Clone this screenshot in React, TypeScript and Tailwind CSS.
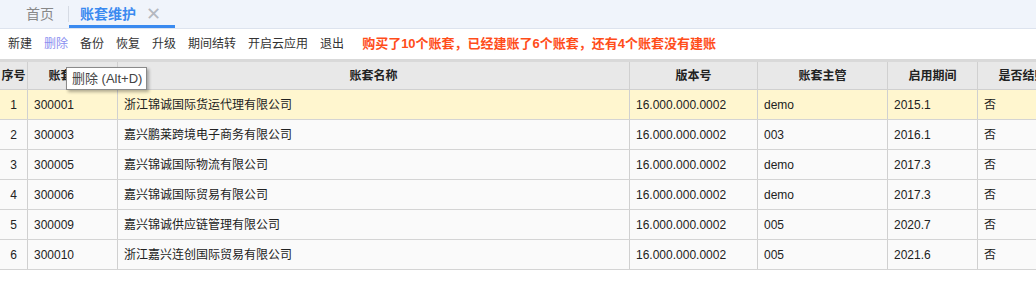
import React from 'react';

const font = { fontFamily: '"Liberation Sans", "Noto Sans CJK SC", sans-serif' };

const tools = ['新建', '删除', '备份', '恢复', '升级', '期间结转', '开启云应用', '退出'];

const columns = [
   { title: '序号', w: 'w-[27px]', center: true },
   { title: '账套编号', w: 'w-[90px]' },
   { title: '账套名称', w: 'w-[512px]' },
   { title: '版本号', w: 'w-[128px]' },
   { title: '账套主管', w: 'w-[130px]' },
   { title: '启用期间', w: 'w-[90px]' },
   { title: '是否结账', w: 'w-[90px]' },
];

const rows = [
   ['1', '300001', '浙江锦诚国际货运代理有限公司', '16.000.000.0002', 'demo', '2015.1', '否'],
   ['2', '300003', '嘉兴鹏莱跨境电子商务有限公司', '16.000.000.0002', '003', '2016.1', '否'],
   ['3', '300005', '嘉兴锦诚国际物流有限公司', '16.000.000.0002', 'demo', '2017.3', '否'],
   ['4', '300006', '嘉兴锦诚国际贸易有限公司', '16.000.000.0002', 'demo', '2017.3', '否'],
   ['5', '300009', '嘉兴锦诚供应链管理有限公司', '16.000.000.0002', '005', '2020.7', '否'],
   ['6', '300010', '浙江嘉兴连创国际贸易有限公司', '16.000.000.0002', '005', '2021.6', '否'],
];

const App = () => {
   return (
      <div className="w-[1036px] h-[287px] bg-white overflow-hidden text-[#333]" style={font}>
         {/* tab bar */}
         <div className="h-[29px] bg-[#f0f4fb] border-b border-[#dde3ee] flex items-end pl-[12px]">
            <div className="h-[28px] flex items-center px-[14px] text-[14px] text-[#888]">首页</div>
            <div className="w-px h-[16px] bg-[#d6dbe4] mb-[6px]" />
            <div className="h-[28px] flex items-center gap-[10px] pl-[11px] pr-[14px] border-b-[3px] border-[#3a8af0] text-[14px] font-bold text-[#3a8af0]">
               <span className="mt-[3px]">账套维护</span>
               <span className="mt-[2px] text-[#b4b8c0] text-[18px] font-normal leading-none">✕</span>
            </div>
         </div>

         {/* toolbar */}
         <div className="h-[30px] flex items-center pl-[8px] text-[12px]">
            <div className="flex gap-[12px]">
               {tools.map((t) => (
                  <span key={t} className={t === '删除' ? 'text-[#8a8ef0]' : 'text-[#333]'}>
                     {t}
                  </span>
               ))}
            </div>
            <span className="ml-[18px] text-[13px] font-bold text-[#ff4d1a]">
               购买了10个账套，已经建账了6个账套，还有4个账套没有建账
            </span>
         </div>

         {/* table */}
         <div className="relative border-t-[3px] border-[#d9d9d9]">
            <div className="flex w-[1100px] h-[28px] bg-[#e8e8e8] border-b border-[#d0d0d0]">
               {columns.map((c, i) => (
                  <div
                     key={c.title}
                     className={`${c.w} shrink-0 flex items-center justify-center text-[12px] font-bold text-[#222] ${i > 0 ? 'border-l border-[#d0d0d0]' : ''}`}
                  >
                     {c.title}
                  </div>
               ))}
            </div>
            {rows.map((r, ri) => (
               <div
                  key={r[0]}
                  className={`flex w-[1100px] h-[30px] border-b border-[#d4d4d4] ${ri === 0 ? 'bg-[#fff6cf]' : 'bg-[#fafafa]'}`}
               >
                  {r.map((v, i) => (
                     <div
                        key={i}
                        className={`${columns[i].w} shrink-0 flex items-center text-[12px] text-[#222] ${columns[i].center ? 'justify-center' : 'pl-[6px]'} ${i > 0 ? 'border-l border-[#d0d0d0]' : ''}`}
                     >
                        {v}
                     </div>
                  ))}
               </div>
            ))}

            {/* tooltip */}
            <div className="absolute left-[66px] top-[5px] w-[81px] h-[23px] pl-[5px] flex items-center bg-white border border-[#8a8a8a] text-[13px] text-[#444] shadow-[2px_2px_3px_rgba(0,0,0,0.3)]">
               删除 (Alt+D)
            </div>
         </div>
      </div>
   );
};

export default App;
